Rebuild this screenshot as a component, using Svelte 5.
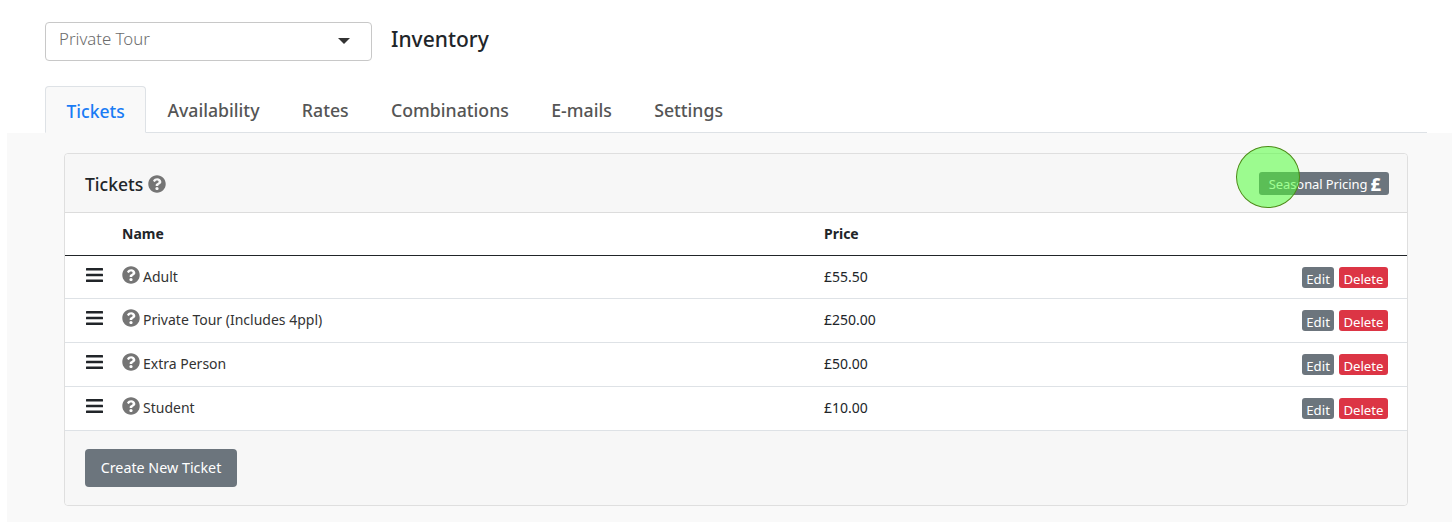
<script>
  const tabs = ['Tickets', 'Availability', 'Rates', 'Combinations', 'E-mails', 'Settings'];
  const rows = [
    { name: 'Adult', price: '£55.50' },
    { name: 'Private Tour (Includes 4ppl)', price: '£250.00' },
    { name: 'Extra Person', price: '£50.00' },
    { name: 'Student', price: '£10.00' }
  ];
  const q = 'M504 256c0 136.997-111.043 248-248 248S8 392.997 8 256C8 119.083 119.043 8 256 8s248 111.083 248 248zM262.655 90c-54.497 0-89.255 22.957-116.549 63.758-3.536 5.286-2.353 12.415 2.715 16.258l34.699 26.31c5.205 3.947 12.621 3.008 16.665-2.122 17.864-22.658 30.113-35.797 57.303-35.797 20.429 0 45.698 13.148 45.698 32.958 0 14.976-12.363 22.667-32.534 33.976C247.128 238.528 216 254.941 216 296v4c0 6.627 5.373 12 12 12h56c6.627 0 12-5.373 12-12v-1.333c0-28.462 83.186-29.647 83.186-106.667 0-58.002-60.165-102-116.531-102zM256 338c-25.365 0-46 20.635-46 46 0 25.364 20.635 46 46 46s46-20.636 46-46c0-25.365-20.635-46-46-46z';
</script>

<div class="page">
  <div class="top">
    <div class="select">
      <span>Private Tour</span>
      <i class="caret"></i>
    </div>
    <h1>Inventory</h1>
  </div>

  <ul class="tabs">
    {#each tabs as t, i}
      <li class:active={i === 0}>{t}</li>
    {/each}
  </ul>

  <div class="panel">
    <div class="card">
      <div class="card-head">
        <div class="title">
          Tickets
          <svg class="q" viewBox="0 0 512 512"><path d={q} /></svg>
        </div>
        <div class="seasonal">Seasonal Pricing <b>£</b></div>
        <div class="spot"></div>
      </div>

      <div class="thead">
        <span class="c-name">Name</span>
        <span class="c-price">Price</span>
      </div>

      {#each rows as r}
        <div class="row">
          <svg class="bars" viewBox="0 0 17 14">
            <rect x="0" y="0" width="17" height="2.6" rx=".5" />
            <rect x="0" y="5.7" width="17" height="2.6" rx=".5" />
            <rect x="0" y="11.4" width="17" height="2.6" rx=".5" />
          </svg>
          <span class="c-name cell">
            <svg class="q" viewBox="0 0 512 512"><path d={q} /></svg>
            <span class="label">{r.name}</span>
          </span>
          <span class="c-price label">{r.price}</span>
          <span class="actions">
            <span class="btn edit">Edit</span>
            <span class="btn del">Delete</span>
          </span>
        </div>
      {/each}

      <div class="card-foot">
        <div class="create">Create New Ticket</div>
      </div>
    </div>
  </div>
</div>

<style>
  :global(body) {
    margin: 0;
    background: #fff;
  }
  .page {
    width: 1452px;
    height: 522px;
    overflow: hidden;
    font-family: "Noto Sans", "Open Sans", sans-serif;
    color: #212529;
    box-sizing: border-box;
  }
  .top {
    display: flex;
    align-items: center;
    gap: 19px;
    padding: 22px 0 0 45px;
    height: 39px;
  }
  .select {
    width: 327px;
    height: 39px;
    box-sizing: border-box;
    border: 1px solid #c8c8c8;
    border-radius: 4px;
    padding: 0 21px 7px 13px;
    display: flex;
    align-items: center;
    justify-content: space-between;
    font-size: 16.8px;
    font-weight: 300;
    color: #6c6c6c;
  }
  .caret {
    width: 0;
    height: 0;
    border-left: 6.5px solid transparent;
    border-right: 6.5px solid transparent;
    border-top: 6.5px solid #333;
    margin-top: 5px;
  }
  h1 {
    margin: 0 0 4px;
    font-size: 21px;
    font-weight: 500;
    line-height: 1.2;
    color: #212529;
  }
  .tabs {
    list-style: none;
    display: flex;
    margin: 25px 25px 0 45px;
    padding: 0;
    height: 46px;
    border-bottom: 1px solid #dee2e6;
  }
  .tabs li {
    box-sizing: border-box;
    height: 46px;
    padding: 2px 20.2px 0;
    border: 1px solid transparent;
    display: flex;
    align-items: center;
    font-size: 17.7px;
    font-weight: 500;
    color: #555;
  }
  .tabs li.active {
    height: 47px;
    padding: 2px 20.5px 0;
    font-size: 17.5px;
    color: #1a7cf5;
    background: #f9f9f9;
    border-color: #dee2e6 #dee2e6 #f9f9f9;
    border-radius: 4px 4px 0 0;
  }
  .panel {
    margin-left: 7px;
    background: #f9f9f9;
    padding: 20px 44px 16px 57px;
    position: relative;
  }
  .card {
    border: 1px solid #dfdfdf;
    border-radius: 4px;
    background: #fff;
    font-size: 14px;
  }
  .card-head {
    height: 58px;
    background: #f7f7f7;
    border-bottom: 1px solid #dcdcdc;
    border-radius: 4px 4px 0 0;
    display: flex;
    align-items: center;
    justify-content: space-between;
    padding: 0 18px 0 20px;
    position: relative;
  }
  .title {
    display: flex;
    align-items: center;
    gap: 5px;
    font-size: 17.5px;
    font-weight: 500;
    margin-top: 2px;
  }
  .title .q {
    width: 18px;
    height: 18px;
  }
  .q {
    fill: #757575;
    flex: none;
  }
  .seasonal {
    height: 23px;
    box-sizing: border-box;
    padding: 1px 8px 0 9.5px;
    display: flex;
    align-items: center;
    border-radius: 3px;
    background: #6c757d;
    color: #fff;
    font-size: 13px;
    letter-spacing: -0.1px;
    white-space: pre;
  }
  .seasonal b {
    font-size: 18px;
    line-height: 1;
    font-weight: 800;
    letter-spacing: 0;
  }
  .spot {
    position: absolute;
    left: 1171px;
    top: -8px;
    width: 64px;
    height: 62px;
    box-sizing: border-box;
    border-radius: 50%;
    background: rgba(75, 255, 51, 0.53);
    border: 1px solid #4c8a17;
  }
  .thead {
    height: 43px;
    padding-bottom: 1px;
    box-sizing: border-box;
    border-bottom: 1px solid #212529;
    display: flex;
    align-items: center;
    font-weight: 700;
  }
  .c-name {
    margin-left: 57px;
    width: 702px;
    flex: none;
  }
  .c-price {
    flex: none;
  }
  .row {
    height: 44px;
    box-sizing: border-box;
    border-bottom: 1px solid #dee2e6;
    display: flex;
    align-items: center;
    padding-left: 21px;
  }
  .thead + .row {
    height: 43px;
  }
  .row .c-name {
    margin-left: 19px;
  }
  .bars {
    width: 17px;
    height: 14px;
    fill: #212529;
    flex: none;
    margin-top: -5px;
  }
  .cell {
    display: flex;
    align-items: center;
    gap: 3px;
    color: #333;
  }
  .label {
    margin-top: -2px;
  }
  .cell .q {
    width: 18px;
    height: 18px;
    margin-top: -5px;
  }
  .actions {
    margin-left: auto;
    margin-right: 19px;
    display: flex;
    gap: 5px;
  }
  .btn {
    height: 21px;
    box-sizing: border-box;
    padding: 3px 4.5px 0;
    border-radius: 3px;
    color: #fff;
    font-size: 13.2px;
    display: flex;
    align-items: center;
  }
  .edit {
    background: #6c757d;
    padding: 3px 4px 0;
  }
  .del {
    background: #dc3545;
  }
  .card-foot {
    height: 74px;
    box-sizing: border-box;
    background: #f7f7f7;
    border-radius: 0 0 4px 4px;
    padding: 18px 20px;
  }
  .create {
    width: 152px;
    height: 38px;
    box-sizing: border-box;
    padding-bottom: 2px;
    border-radius: 4px;
    background: #6c757d;
    color: #fff;
    font-size: 14.3px;
    display: flex;
    align-items: center;
    justify-content: center;
  }
</style>
